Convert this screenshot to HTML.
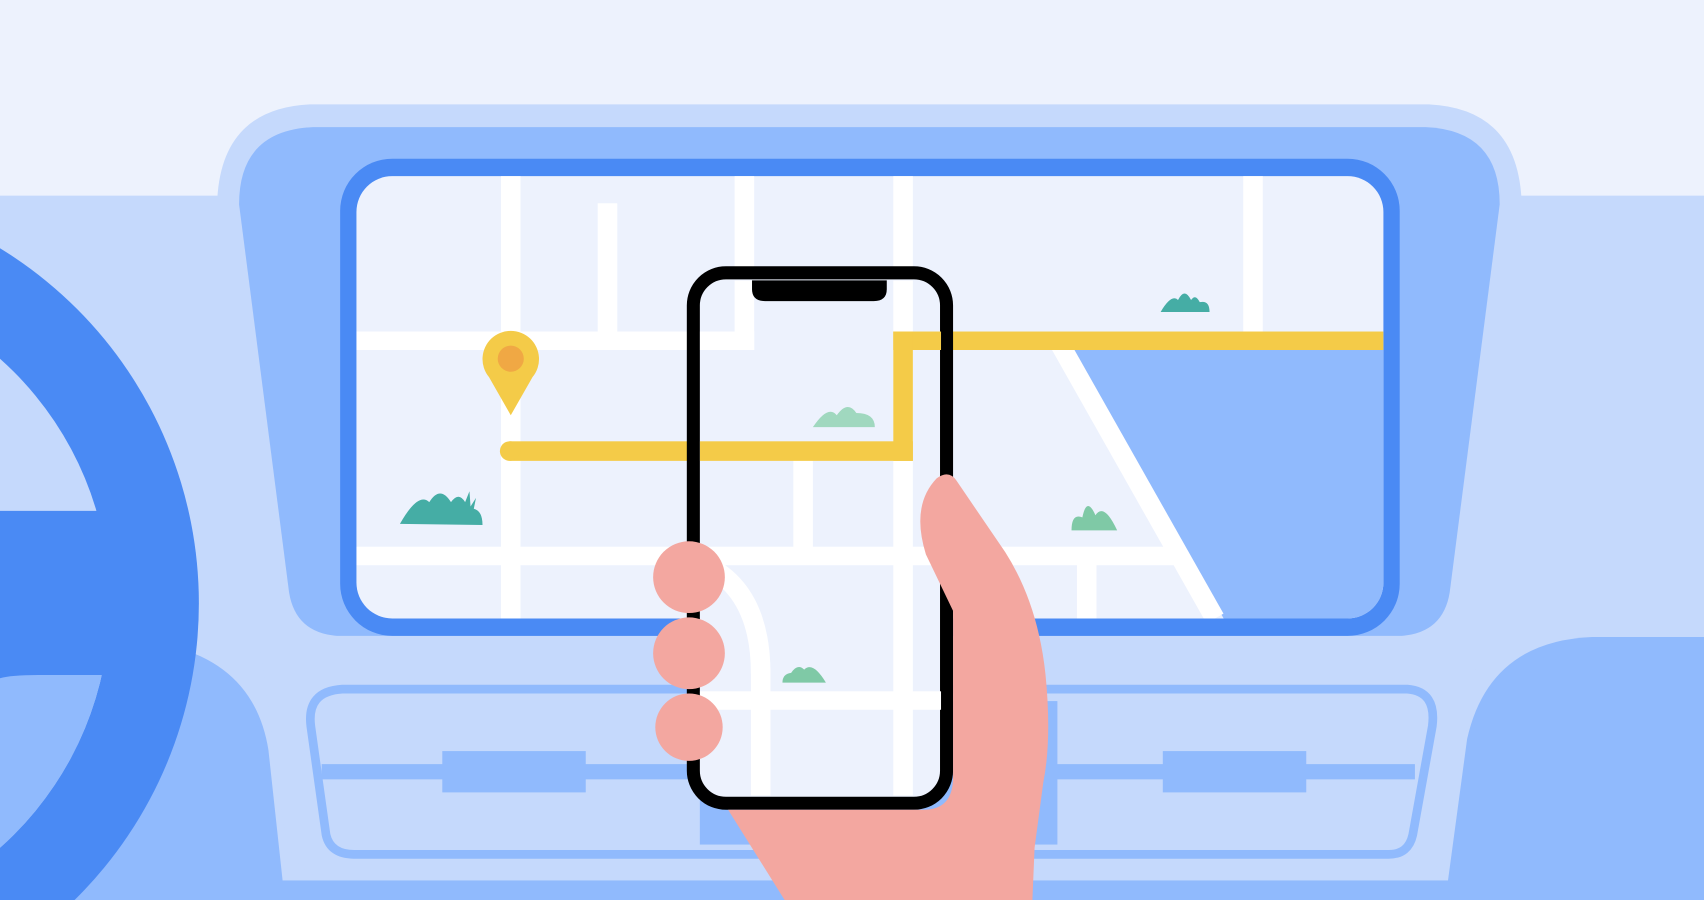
<!DOCTYPE html>
<html><head><style>html,body{margin:0;padding:0;overflow:hidden;background:#EDF2FD;width:1704px;height:900px}svg{display:block}</style></head>
<body>
<svg width="1704" height="900" viewBox="0 0 1568 828" preserveAspectRatio="none" xmlns="http://www.w3.org/2000/svg">
<defs>
<clipPath id="scr"><rect x="328" y="162" width="945" height="407" rx="33"/></clipPath>
<clipPath id="ph"><rect x="644" y="258" width="222" height="474" rx="22"/></clipPath>
</defs>
<rect width="1568" height="828" fill="#EDF2FD"/>
<rect y="180" width="1568" height="648" fill="#C5D9FC"/>
<path d="M0,828 V595 H160 Q235,615 247,690 L262,828 Z" fill="#90BAFD"/>
<path d="M1350,680 Q1370,590 1465,586 H1568 V828 H1330 Z" fill="#90BAFD"/>
<path d="M240,600 L262,765 Q270,808 310,810 H1290 Q1330,808 1336,765 L1360,600 Z" fill="#C5D9FC"/>
<rect x="150" y="810" width="1300" height="18" fill="#90BAFD"/>
<path d="M200,182 Q205,100 285,96 H1315 Q1395,100 1400,182 Z" fill="#C5D9FC"/>
<path d="M220,188 Q220,120 288,117 H1312 Q1380,120 1380,188 L1334,545 Q1328,582 1290,585 H310 Q272,582 266,545 Z" fill="#90BAFD"/>
<rect x="313" y="146" width="975" height="439" rx="48" fill="#4A8AF4"/>
<rect x="328" y="162" width="945" height="407" rx="33" fill="#EDF2FD"/>
<g clip-path="url(#scr)">
<polygon points="987,322 1273,322 1273,569 1126,569" fill="#90BAFD"/>
<g fill="#fff">
<rect x="461" y="162" width="18" height="407"/>
<rect x="550" y="187" width="18" height="120"/>
<rect x="676" y="162" width="18" height="160"/>
<rect x="822" y="162" width="18" height="407"/>
<rect x="1144" y="162" width="18" height="145"/>
<rect x="730" y="420" width="18" height="96"/>
<rect x="991" y="515" width="18" height="54"/>
<rect x="328" y="305" width="366" height="17"/>
<rect x="328" y="503" width="752" height="17"/>
</g>
<line x1="975" y1="316" x2="1118" y2="569" stroke="#fff" stroke-width="18"/>
<g fill="#F4CB48">
<rect x="822" y="305" width="451" height="17"/>
<rect x="822" y="305" width="18" height="119"/>
<rect x="469" y="406" width="371" height="18"/>
<circle cx="469" cy="415" r="9"/>
</g>
<path d="M450,347 A26,26 0 1 1 490,347 L470,382 Z" fill="#F4CB48"/>
<circle cx="470" cy="330" r="12" fill="#F0A844"/>
<path d="M368,482 Q385,452 395,462 Q405,446 415,462 Q422,452 428,462 L432,452 L433,466 L438,458 L436,468 Q444,470 444,483 Z" fill="#45ADA5"/>
<path d="M1068,287 Q1078,270 1084,276 Q1090,264 1096,276 Q1100,270 1104,278 Q1113,276 1113,287 Z" fill="#45ADA5"/>
<path d="M748,393 Q762,372 770,382 Q780,368 788,380 Q805,380 805,393 Z" fill="#A0D8BF"/>
<path d="M986,488 Q986,472 996,476 Q1000,456 1008,474 Q1016,462 1028,488 Z" fill="#7FC9A6"/>
</g>
<path d="M286,668 Q282,636 315,634 H1295 Q1322,636 1318,668 L1300,768 Q1296,786 1278,786 H326 Q304,786 300,768 Z" fill="#C5D9FC" stroke="#90BAFD" stroke-width="8"/>
<rect x="644" y="645" width="329" height="132" fill="#90BAFD"/>
<rect x="296" y="703" width="1006" height="14" fill="#90BAFD"/>
<rect x="407" y="691" width="132" height="38" fill="#90BAFD"/>
<rect x="1070" y="691" width="132" height="38" fill="#90BAFD"/>
<circle cx="-200" cy="555" r="383" fill="#4A8AF4"/>
<circle cx="-200" cy="555" r="301" fill="#C5D9FC"/>
<path d="M-200,555 L101,555 A301,301 0 0 1 -200,856 Z" fill="#90BAFD"/>
<path d="M0,470 H115 L115,621 H35 Q10,621 0,624 Z" fill="#4A8AF4"/>
<rect x="638" y="251" width="233" height="488" rx="30" fill="#EDF2FD" stroke="#000" stroke-width="12"/>
<g clip-path="url(#ph)">
<g fill="#fff">
<rect x="676" y="258" width="18" height="64"/>
<rect x="822" y="258" width="18" height="474"/>
<rect x="730" y="420" width="18" height="96"/>
<rect x="644" y="305" width="50" height="17"/>
<rect x="644" y="503" width="222" height="17"/>
<rect x="644" y="636" width="222" height="17"/>
<rect x="691" y="615" width="18" height="117"/>
</g>
<path d="M650,520 Q700,545 700,620" fill="none" stroke="#fff" stroke-width="18"/>
<g fill="#F4CB48"><rect x="822" y="305" width="44" height="17"/><rect x="822" y="305" width="18" height="119"/><rect x="644" y="406" width="196" height="18"/></g>
<path d="M748,393 Q762,372 770,382 Q780,368 788,380 Q805,380 805,393 Z" fill="#A0D8BF"/>
<path d="M720,628 Q720,620 728,619 Q734,610 740,616 Q748,608 760,628 Z" fill="#7FC9A6"/>
</g>
<path d="M692,258 H816 V266 Q816,277 804,277 H704 Q692,277 692,266 Z" fill="#000"/>
<g fill="#F3A7A0">
<path d="M877,715 V562 L852,510 Q838,465 862,440 Q873,432 880,442 L925,508 Q955,555 962,620 Q968,680 960,720 L952,780 L950,828 H722 L670,745 H850 Q877,745 877,715 Z"/>
<circle cx="634" cy="531" r="33"/>
<circle cx="634" cy="601" r="33"/>
<circle cx="634" cy="669" r="31"/>
</g>
</svg>
</body></html>
